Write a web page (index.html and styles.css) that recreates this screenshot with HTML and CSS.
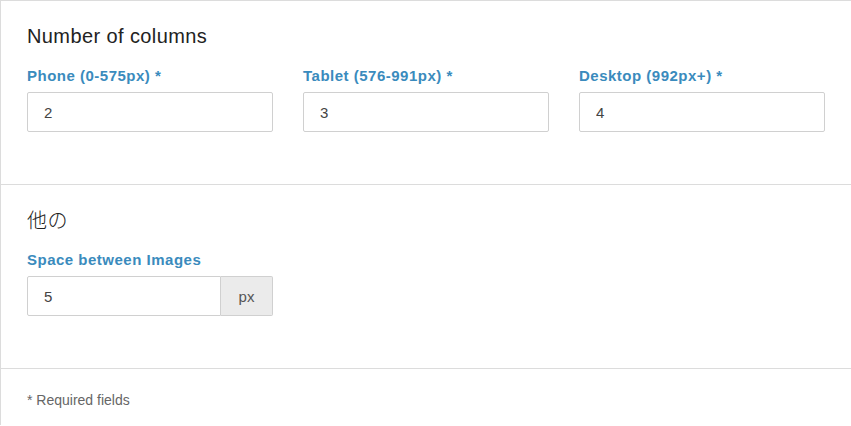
FILE: index.html
```html
<!DOCTYPE html>
<html lang="ja">
<head>
<meta charset="utf-8">
<title>Settings</title>
<link rel="stylesheet" href="styles.css">
</head>
<body>
<div class="panel">
  <section class="section">
    <h3 class="section-title">Number of columns</h3>
    <div class="grid">
      <div class="field">
        <label class="label">Phone (0-575px) *</label>
        <input class="input" type="text" value="2">
      </div>
      <div class="field">
        <label class="label">Tablet (576-991px) *</label>
        <input class="input" type="text" value="3">
      </div>
      <div class="field">
        <label class="label">Desktop (992px+) *</label>
        <input class="input" type="text" value="4">
      </div>
    </div>
  </section>
  <section class="section">
    <h3 class="section-title cjk">他の</h3>
    <div class="grid">
      <div class="field">
        <label class="label">Space between Images</label>
        <div class="input-group">
          <input class="input input-grouped" type="text" value="5">
          <span class="addon">px</span>
        </div>
      </div>
    </div>
  </section>
  <footer class="footer">* Required fields</footer>
</div>
</body>
</html>
```
FILE: styles.css
```css
html, body {
  margin: 0;
  padding: 0;
  background: #fff;
}
body {
  font-family: "Liberation Sans", Arial, "Noto Sans CJK JP", sans-serif;
  color: #222;
}
.panel {
  border-top: 1px solid #dcdcdc;
  border-left: 1px solid #dcdcdc;
  min-height: 425px;
  box-sizing: border-box;
}
.section {
  height: 184px;
  box-sizing: border-box;
  padding: 23px 26px 0 26px;
  border-bottom: 1px solid #dcdcdc;
}
.section-title {
  margin: 0;
  font-size: 20px;
  line-height: 24px;
  font-weight: normal;
  letter-spacing: 0.4px;
  color: #222;
}
.cjk {
  font-family: "Noto Sans CJK JP", sans-serif;
  font-weight: 300;
  letter-spacing: 0.5px;
}
.grid {
  display: grid;
  grid-template-columns: 246px 246px 246px;
  column-gap: 30px;
  margin-top: 18px;
}
.field {
  display: flex;
  flex-direction: column;
}
.label {
  font-size: 15px;
  line-height: 20px;
  font-weight: bold;
  letter-spacing: 0.5px;
  color: #3a8bbd;
  margin-bottom: 6px;
}
.input {
  box-sizing: border-box;
  width: 246px;
  height: 40px;
  border: 1px solid #d0d0d0;
  border-radius: 2px;
  padding: 0 16px;
  font-family: "Liberation Sans", Arial, sans-serif;
  font-size: 15px;
  color: #444;
  background: #fff;
  outline: none;
}
.input-group {
  display: flex;
  width: 246px;
}
.input-grouped {
  width: 194px;
  border-radius: 2px 0 0 2px;
}
.addon {
  box-sizing: border-box;
  width: 52px;
  height: 40px;
  display: flex;
  align-items: center;
  justify-content: center;
  background: #ebebeb;
  border: 1px solid #d0d0d0;
  border-left: none;
  border-radius: 0 2px 2px 0;
  font-size: 15px;
  color: #555;
}
.footer {
  padding: 22px 26px 0 26px;
  font-size: 14px;
  line-height: 18px;
  color: #666;
}
```
